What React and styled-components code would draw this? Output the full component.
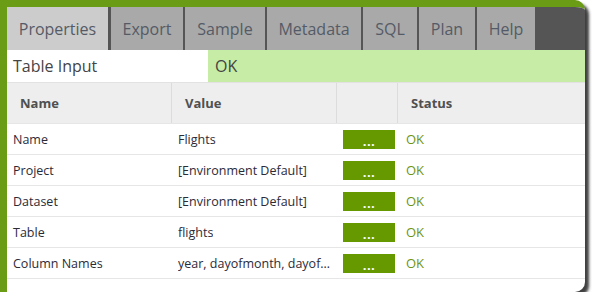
import React from "react";
import styled, { createGlobalStyle } from "styled-components";

const GlobalStyle = createGlobalStyle`
  html, body {
    margin: 0;
    padding: 0;
    background: #ffffff;
  }
  body {
    font-family: "Open Sans", "Liberation Sans", sans-serif;
  }
`;

const Panel = styled.div`
  box-sizing: border-box;
  width: 585px;
  height: 292px;
  border-top: 7px solid #6b9c16;
  border-left: 7px solid #6b9c16;
  border-radius: 0 10px 10px 0;
  background: #ffffff;
  box-shadow: 4px 4px 3px rgba(30, 30, 30, 0.85);
  overflow: hidden;
  display: flex;
  flex-direction: column;
`;

const TabBar = styled.div`
  display: flex;
  gap: 2px;
  height: 43px;
  background: #555555;
  flex-shrink: 0;
`;

const Tab = styled.div`
  display: flex;
  align-items: center;
  justify-content: center;
  width: ${(p) => p.$w}px;
  box-sizing: border-box;
  font-size: 16px;
  color: #555b66;
  background: ${(p) => (p.$active ? "#cccccc" : "#a9a9a9")};
  margin-right: ${(p) => (p.$active ? "1px" : "0")};
`;

const InfoRow = styled.div`
  display: grid;
  grid-template-columns: 201px 1fr;
  height: 32px;
  font-size: 16px;
  color: #444444;
  flex-shrink: 0;
`;

const InfoCell = styled.div`
  display: flex;
  align-items: center;
  padding-left: ${(p) => (p.$ok ? "7px" : "6px")};
  background: ${(p) => (p.$ok ? "#c6eca6" : "#ffffff")};
`;

const Row = styled.div`
  display: grid;
  grid-template-columns: 165px 165px 61px 1fr;
  height: ${(p) => (p.$head ? "41px" : "31px")};
  box-sizing: border-box;
  border-top: 1px solid ${(p) => (p.$head ? "#e2e2e2" : "#e6e6e6")};
  background: ${(p) => (p.$head ? "#eeeeee" : "#ffffff")};
  flex-shrink: 0;
`;

const HeadCell = styled.div`
  display: flex;
  align-items: center;
  padding-left: 13px;
  font-size: 13px;
  font-weight: 700;
  color: #505050;
  border-right: ${(p) => (p.$last ? "none" : "1px solid #dcdcdc")};
`;

const Cell = styled.div`
  display: flex;
  align-items: center;
  padding-left: 6px;
  font-size: 12.5px;
  color: #2b2b38;
  min-width: 0;
`;

const Ellipsis = styled.span`
  white-space: nowrap;
  overflow: hidden;
  text-overflow: ellipsis;
`;

const ButtonCell = styled.div`
  display: flex;
  align-items: center;
  padding-left: 6px;
`;

const EditButton = styled.div`
  width: 52px;
  height: 19px;
  background: #669900;
  color: #ffffff;
  font-size: 13px;
  font-weight: 700;
  display: flex;
  align-items: flex-end;
  justify-content: center;
  line-height: 16px;
  letter-spacing: 0.5px;
`;

const Status = styled.div`
  display: flex;
  align-items: center;
  padding-left: 8px;
  font-size: 13px;
  color: #6f9410;
`;

const Footer = styled.div`
  flex: 1;
  border-top: 1px solid #e6e6e6;
`;

const tabs = [
  { label: "Properties", w: 101 },
  { label: "Export", w: 72 },
  { label: "Sample", w: 80 },
  { label: "Metadata", w: 94 },
  { label: "SQL", w: 54 },
  { label: "Plan", w: 56 },
  { label: "Help", w: 58 },
];

const rows = [
  { name: "Name", value: "Flights" },
  { name: "Project", value: "[Environment Default]" },
  { name: "Dataset", value: "[Environment Default]" },
  { name: "Table", value: "flights" },
  { name: "Column Names", value: "year, dayofmonth, dayofweek, deptime" },
];

const App = () => {
  return (
    <>
      <GlobalStyle />
      <Panel>
        <TabBar>
          {tabs.map((t, i) => (
            <Tab key={t.label} $w={t.w} $active={i === 0}>
              {t.label}
            </Tab>
          ))}
        </TabBar>
        <InfoRow>
          <InfoCell>Table Input</InfoCell>
          <InfoCell $ok>OK</InfoCell>
        </InfoRow>
        <Row $head>
          <HeadCell>Name</HeadCell>
          <HeadCell>Value</HeadCell>
          <HeadCell />
          <HeadCell $last>Status</HeadCell>
        </Row>
        {rows.map((r) => (
          <Row key={r.name}>
            <Cell>{r.name}</Cell>
            <Cell>
              <Ellipsis>{r.value}</Ellipsis>
            </Cell>
            <ButtonCell>
              <EditButton>...</EditButton>
            </ButtonCell>
            <Status>OK</Status>
          </Row>
        ))}
        <Footer />
      </Panel>
    </>
  );
};

export default App;
